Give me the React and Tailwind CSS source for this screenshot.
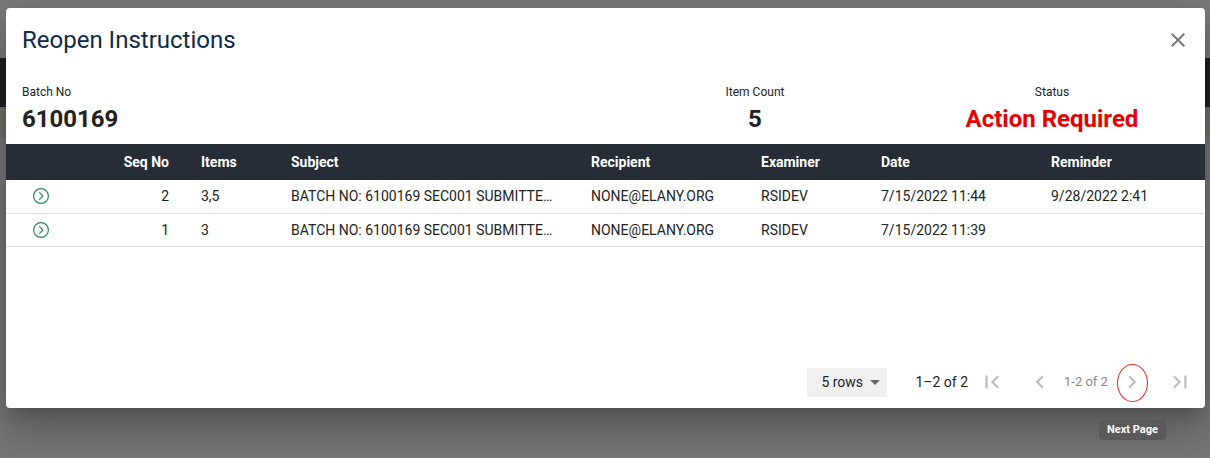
import React from 'react';

const rows = [
  { seq: 2, items: '3,5', subject: 'BATCH NO: 6100169 SEC001 SUBMITTED FOR REOPEN', recipient: 'NONE@ELANY.ORG', examiner: 'RSIDEV', date: '7/15/2022 11:44', reminder: '9/28/2022 2:41' },
  { seq: 1, items: '3', subject: 'BATCH NO: 6100169 SEC001 SUBMITTED FOR REOPEN', recipient: 'NONE@ELANY.ORG', examiner: 'RSIDEV', date: '7/15/2022 11:39', reminder: '' },
];

function MIcon({ d, className }) {
  return (
    <svg viewBox="0 0 24 24" className={className} fill="currentColor">
      <path d={d} />
    </svg>
  );
}

function RowIcon() {
  return (
    <svg viewBox="0 0 18 18" className="w-[18px] h-[18px] text-[#2f8a5c]" fill="none" stroke="currentColor" strokeWidth="1.2">
      <circle cx="9" cy="9" r="7.4" />
      <path d="M7.6 5.6 L10.9 9 L7.6 12.4" strokeLinecap="round" strokeLinejoin="round" />
    </svg>
  );
}

export default function App() {
  return (
    <div className="relative w-[1210px] h-[458px] overflow-hidden bg-[#777777]" style={{ fontFamily: 'Roboto, "Liberation Sans", sans-serif' }}>
      {/* page behind the backdrop */}
      <div className="flex flex-col">
        <div className="h-[58px] bg-[#7b7b7b]" />
        <div className="h-[49px] bg-[#1d2023]" />
        <div className="h-[30px] bg-[#6d7368]" />
      </div>

      <div className="absolute left-[6px] top-[8px] w-[1199px] h-[400px] bg-white rounded flex flex-col shadow-[0_11px_15px_-7px_rgba(0,0,0,0.2),0_24px_38px_3px_rgba(0,0,0,0.14),0_9px_46px_8px_rgba(0,0,0,0.12)]">
        <div className="flex items-start justify-between pl-4 pr-[15px] pt-4">
          <h2 className="text-2xl leading-8 text-[#0e2a47]">Reopen Instructions</h2>
          <MIcon className="w-6 h-6 text-[#777] mt-1" d="M19 6.41L17.59 5 12 10.59 6.41 5 5 6.41 10.59 12 5 17.59 6.41 19 12 13.41 17.59 19 19 17.59 13.41 12z" />
        </div>

        <div className="flex pl-4 pt-[28px] pb-[11px] text-[#222]">
          <div className="flex-1">
            <div className="text-xs leading-4">Batch No</div>
            <div className="text-2xl font-bold leading-7 mt-[5px]">6100169</div>
          </div>
          <div className="w-[200px] text-center">
            <div className="text-xs leading-4">Item Count</div>
            <div className="text-2xl font-bold leading-7 mt-[5px]">5</div>
          </div>
          <div className="w-[200px] ml-[97px] mr-[53px] text-center">
            <div className="text-xs leading-4">Status</div>
            <div className="text-2xl font-bold leading-7 mt-[5px] text-[#e60000]">Action Required</div>
          </div>
        </div>

        <table className="w-full table-fixed border-collapse text-sm">
          <colgroup>
            <col className="w-[68px]" />
            <col className="w-[111px]" />
            <col className="w-[90px]" />
            <col className="w-[300px]" />
            <col className="w-[170px]" />
            <col className="w-[120px]" />
            <col className="w-[170px]" />
            <col className="w-[170px]" />
          </colgroup>
          <thead>
            <tr className="bg-[#262d37] text-white font-bold h-9">
              <th />
              <th className="text-right pr-4">Seq No</th>
              <th className="text-left px-4">Items</th>
              <th className="text-left px-4">Subject</th>
              <th className="text-left px-4">Recipient</th>
              <th className="text-left px-4">Examiner</th>
              <th className="text-left px-4">Date</th>
              <th className="text-left px-4">Reminder</th>
            </tr>
          </thead>
          <tbody className="text-[#222]">
            {rows.map((r) => (
              <tr key={r.seq} className="h-[33px] border-b border-[#e0e0e0]">
                <td>
                  <div className="flex justify-center pl-[1px]">
                    <RowIcon />
                  </div>
                </td>
                <td className="text-right pr-4">{r.seq}</td>
                <td className="px-4">{r.items}</td>
                <td className="px-4">
                  <div className="truncate">{r.subject}</div>
                </td>
                <td className="px-4">{r.recipient}</td>
                <td className="px-4">{r.examiner}</td>
                <td className="px-4">{r.date}</td>
                <td className="px-4">{r.reminder}</td>
              </tr>
            ))}
          </tbody>
        </table>

        <div className="mt-auto h-[52px] flex items-center justify-end pr-[1px] text-sm text-[#222]">
          <div className="shrink-0 w-20 h-[29px] bg-[#f0f0f0] flex items-center pl-[14px] pr-[4px] justify-between whitespace-nowrap">
            <span>5 rows</span>
            <MIcon className="shrink-0 w-6 h-6 text-[#666]" d="M7 10l5 5 5-5z" />
          </div>
          <span className="ml-7 whitespace-nowrap">1–2 of 2</span>
          <div className="shrink-0 w-12 flex justify-center text-[#bdbdbd]">
            <MIcon className="w-[26px] h-[26px]" d="M18.41 16.59L13.82 12l4.59-4.59L17 6l-6 6 6 6zM6 6h2v12H6z" />
          </div>
          <div className="shrink-0 w-12 flex justify-center text-[#bdbdbd]">
            <MIcon className="w-[26px] h-[26px]" d="M15.41 7.41L14 6l-6 6 6 6 1.41-1.41L10.83 12z" />
          </div>
          <span className="shrink-0 w-11 text-[13px] text-[#888] whitespace-nowrap">1-2 of 2</span>
          <div className="relative shrink-0 w-12 flex justify-center text-[#bdbdbd]">
            <MIcon className="w-[26px] h-[26px]" d="M10 6L8.59 7.41 13.17 12l-4.58 4.59L10 18l6-6z" />
            <div className="absolute left-[9px] top-[-5px] w-[31px] h-[38px] rounded-[50%] border-[1.5px] border-[#e8231a]" />
          </div>
          <div className="shrink-0 w-12 flex justify-center text-[#bdbdbd]">
            <MIcon className="w-[26px] h-[26px]" d="M5.59 7.41L10.18 12l-4.59 4.59L7 18l6-6-6-6zM16 6h2v12h-2z" />
          </div>
        </div>
      </div>

      <div className="absolute left-[1099px] top-[420px] h-5 px-2 rounded bg-[#5a5a5a] text-white text-[11px] font-bold flex items-center">
        Next Page
      </div>
    </div>
  );
}
